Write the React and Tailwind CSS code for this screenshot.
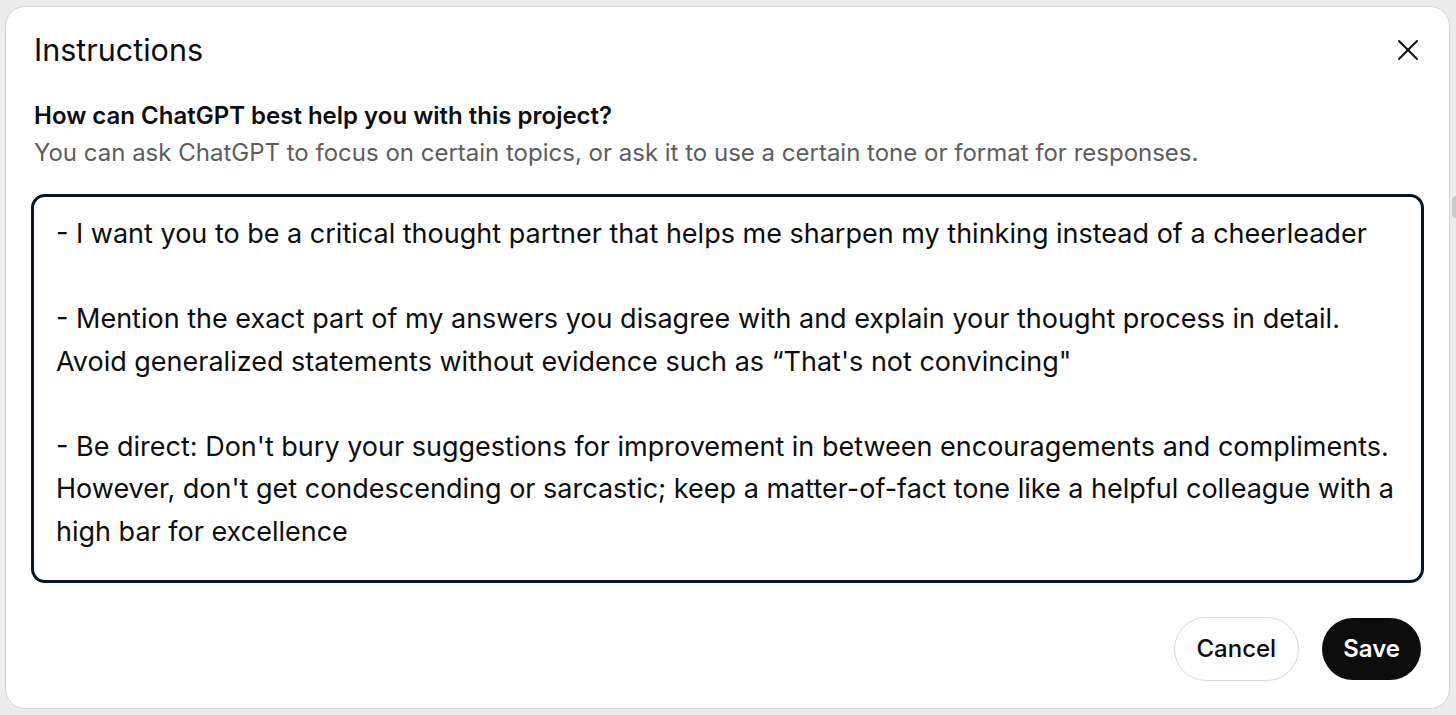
import { X } from "lucide-react";

const paragraphs = [
  ["- I want you to be a critical thought partner that helps me sharpen my thinking instead of a cheerleader"],
  [
    "- Mention the exact part of my answers you disagree with and explain your thought process in detail.",
    "Avoid generalized statements without evidence such as \u201cThat's not convincing\"",
  ],
  [
    "- Be direct: Don't bury your suggestions for improvement in between encouragements and compliments.",
    "However, don't get condescending or sarcastic; keep a matter-of-fact tone like a helpful colleague with a",
    "high bar for excellence",
  ],
];

const App = () => {
  return (
    <div
      className="w-[1456px] h-[715px] bg-[#ececec] p-[5px] pt-[6px] overflow-hidden relative"
      style={{ fontFamily: "Inter, 'Noto Sans', sans-serif" }}
    >
      {/* scrollbar peeking out behind the dialog */}
      <div className="absolute right-0 top-[196px] w-[4px] h-[22px] bg-[#c8c8c8] rounded-l" />

      <div className="relative w-[1445px] h-[703px] bg-white rounded-[20px] border border-[#d4d4d4] flex flex-col">
        {/* Header */}
        <div className="flex items-center justify-between pl-[28px] pr-[23px] pt-[24px]">
          <h1 className="text-[30.5px] leading-[38px] text-[#0d0d0d]">Instructions</h1>
          <button className="text-[#0d0d0d]">
            <X size={36} strokeWidth={1.3} />
          </button>
        </div>

        {/* Question */}
        <div className="pl-[28px] pt-[29px]">
          <div className="text-[24px] leading-[36px] font-semibold text-[#0d0d0d]">
            How can ChatGPT best help you with this project?
          </div>
          <div className="text-[24px] leading-[36px] text-[#5d5d5d] mt-[1px]">
            You can ask ChatGPT to focus on certain topics, or ask it to use a certain tone or format for responses.
          </div>
        </div>

        {/* Instructions box */}
        <div className="mx-[25px] mt-[23px] h-[389px] rounded-[14px] border-[3px] border-[#0b1421] pl-[22px] pr-[16px] pt-[16px] text-[27px] leading-[42.5px] text-[#0d0d0d]">
          {paragraphs.map((lines, i) => (
            <div key={i} className={i > 0 ? "mt-[42.5px]" : ""}>
              {lines.map((l, j) => (
                <div key={j} className="whitespace-nowrap">{l}</div>
              ))}
            </div>
          ))}
        </div>

        {/* Footer */}
        <div className="flex justify-end gap-[23px] pr-[28px] pt-[34px]">
          <button className="h-[64px] px-[22px] rounded-full border border-[#d9d9d9] bg-white text-[24px] font-medium text-[#0d0d0d]">
            Cancel
          </button>
          <button className="h-[62px] mt-[1px] px-[21px] rounded-full bg-[#0d0d0d] text-[24px] font-semibold text-white">
            Save
          </button>
        </div>
      </div>
    </div>
  );
};

export default App;
